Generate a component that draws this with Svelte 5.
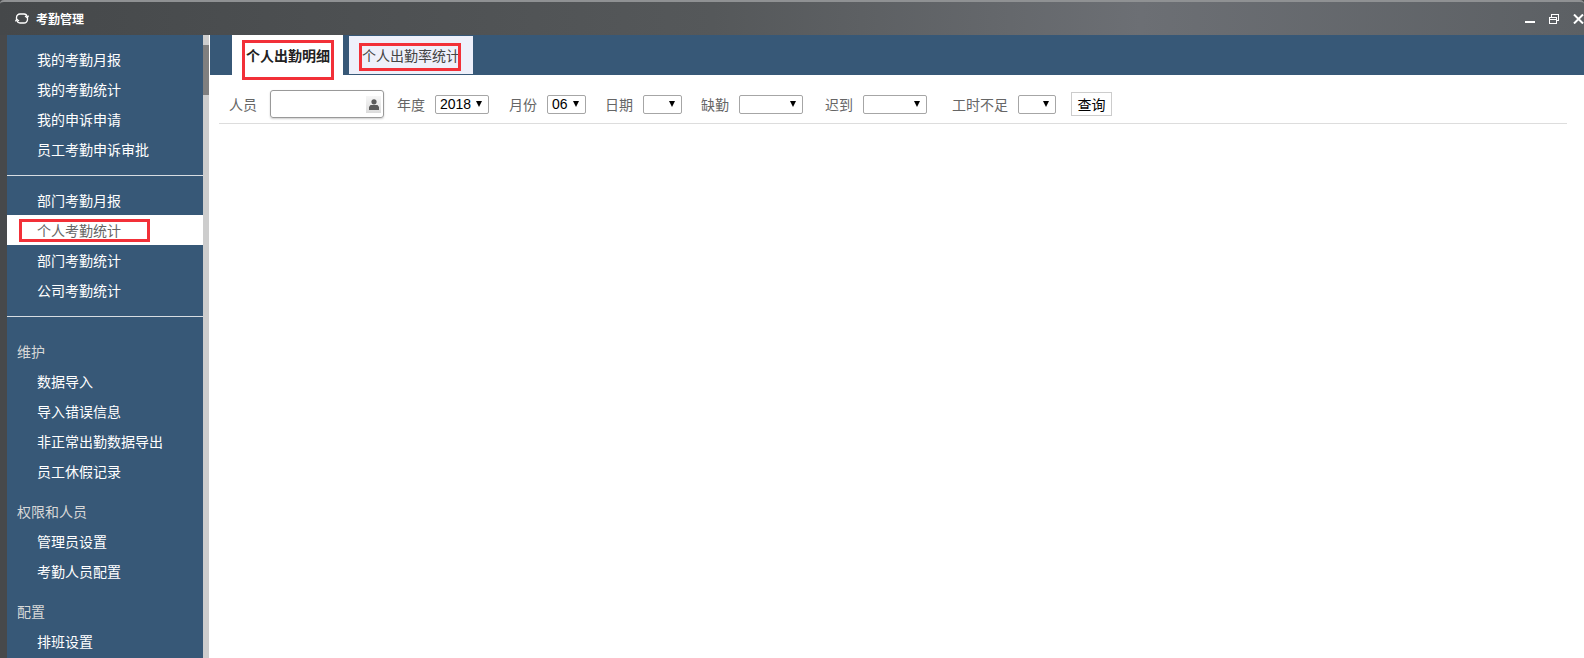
<script>
  const menu = [
    { items: ['我的考勤月报', '我的考勤统计', '我的申诉申请', '员工考勤申诉审批'] },
    { divider: true, items: ['部门考勤月报', '个人考勤统计', '部门考勤统计', '公司考勤统计'] },
    { divider: true, title: '维护', items: ['数据导入', '导入错误信息', '非正常出勤数据导出', '员工休假记录'] },
    { title: '权限和人员', items: ['管理员设置', '考勤人员配置'] },
    { title: '配置', items: ['排班设置'] }
  ];

  const active = '个人考勤统计';

  const filters = [
    { label: '年度', value: '2018', width: 54, left: 13 },
    { label: '月份', value: '06', width: 39, left: 20 },
    { label: '日期', value: '', width: 39, left: 19 },
    { label: '缺勤', value: '', width: 64, left: 19 },
    { label: '迟到', value: '', width: 64, left: 22 },
    { label: '工时不足', value: '', width: 38, left: 25 }
  ];
</script>

<div class="window">
  <header class="titlebar">
    <svg class="refresh" width="14" height="13" viewBox="0 0 14 13" fill="none" stroke="#fff" stroke-width="1.3">
      <path d="M1.5 8 V5.5 A3.5 3.5 0 0 1 5 2 H9 A3 3 0 0 1 12 4.5" />
      <path d="M12.5 5 V7.5 A3.5 3.5 0 0 1 9 11 H5 A3 3 0 0 1 2 8.5" />
      <path d="M10 4 L12 5.5 L13.6 3.6" />
      <path d="M4 9 L2 7.5 L0.4 9.4" />
    </svg>
    <span class="title">考勤管理</span>
    <div class="controls">
      <svg width="10" height="10" viewBox="0 0 10 10"><rect x="0" y="7" width="10" height="2" fill="#fff" /></svg>
      <svg width="10" height="10" viewBox="0 0 10 10" fill="none" stroke="#fff"><rect x="2.5" y="0.5" width="7" height="6" /><rect x="0.5" y="3.5" width="7" height="6" fill="#5c6064" /><path d="M0.5 5.5h7" /></svg>
      <svg width="11" height="10" viewBox="0 0 11 10" stroke="#fff" stroke-width="2"><path d="M1 0.5 L10 9.5 M10 0.5 L1 9.5" /></svg>
    </div>
  </header>

  <div class="body">
    <nav class="sidebar">
      <div class="menu">
        {#each menu as group}
          {#if group.divider}<hr class="divider" />{/if}
          {#if group.title}<div class="group-title">{group.title}</div>{/if}
          <ul>
            {#each group.items as item}
              <li class:active={item === active}>
                {item}
                {#if item === active}<span class="mark mark-side"></span>{/if}
              </li>
            {/each}
          </ul>
        {/each}
      </div>
      <div class="scrollbar"><div class="thumb"></div></div>
    </nav>

    <main class="content">
      <div class="tabs">
        <div class="tab current">个人出勤明细<span class="mark mark-tab1"></span></div>
        <div class="tab">个人出勤率统计<span class="mark mark-tab2"></span></div>
      </div>

      <div class="filters">
        <span class="label">人员</span>
        <div class="person">
          <span class="person-btn">
            <svg width="10" height="11" viewBox="0 0 10 11" fill="#5a5a5a"><circle cx="5" cy="2.8" r="2.6" /><path d="M1.5 6 H8.5 L10 8 V11 H0 V8 Z" /></svg>
          </span>
        </div>
        {#each filters as f}
          <span class="label" style="margin-left: {f.left}px">{f.label}</span>
          <div class="select" style="width: {f.width}px">
            <span>{f.value}</span>
            <i class="arrow"></i>
          </div>
        {/each}
        <button class="query">查询</button>
      </div>
    </main>
  </div>
</div>

<style>
  :global(body) {
    margin: 0;
    background: #fff;
  }

  .window {
    width: 1584px;
    height: 658px;
    overflow: hidden;
    display: flex;
    flex-direction: column;
    font-family: "Noto Sans CJK SC", "Liberation Sans", sans-serif;
    font-size: 14px;
    background: #47494b;
  }

  .titlebar {
    height: 33px;
    flex-shrink: 0;
    display: flex;
    align-items: center;
    padding-left: 15px;
    border-top: 2px solid #8f9193;
    border-radius: 4px 4px 0 0;
    background: linear-gradient(to right, #45484a 0%, #55585a 45%, #6c6f74 72%, #5c6064 100%);
    color: #fff;
  }

  .title {
    margin-left: 7px;
    font-size: 12px;
    font-weight: 700;
  }

  .controls {
    margin-left: auto;
    display: flex;
    align-items: center;
    gap: 14px;
  }

  .body {
    flex: 1;
    display: flex;
    min-height: 0;
    padding-left: 7px;
  }

  .sidebar {
    width: 202px;
    flex-shrink: 0;
    display: flex;
    background: #375877;
    border-right: 1px solid #fff;
  }

  .menu {
    width: 196px;
    padding-top: 9px;
    overflow: hidden;
    color: #fff;
  }

  .menu ul {
    list-style: none;
    margin: 0 0 10px;
    padding: 0;
  }

  .menu li {
    position: relative;
    height: 30px;
    line-height: 30px;
    padding-left: 30px;
  }

  .menu li.active {
    background: #fff;
    color: #666;
  }

  .group-title {
    height: 30px;
    line-height: 30px;
    padding-left: 10px;
    color: #d8d8d8;
  }

  .divider {
    margin: 11px 0 9px;
    border: 0;
    border-top: 1px solid #d8dde2;
  }

  .divider + .group-title {
    margin-top: 19px;
  }

  .menu ul:has(+ .divider) {
    margin-bottom: 0;
  }

  .scrollbar {
    width: 6px;
    background: #cdcdcd;
  }

  .thumb {
    height: 50px;
    margin-top: 10px;
    background: #7f7f7f;
  }

  .content {
    flex: 1;
    min-width: 0;
    background: #fff;
  }

  .tabs {
    height: 40px;
    display: flex;
    align-items: center;
    padding-left: 22px;
    gap: 6px;
    background: #375877;
  }

  .tab {
    position: relative;
    height: 38px;
    line-height: 38px;
    padding: 0 13px;
    background: #eef0fa;
    color: #444;
    box-sizing: border-box;
  }

  .tab.current {
    height: 40px;
    line-height: 40px;
    padding: 0 13px 0 14px;
    background: #fff;
    color: #222;
    font-weight: 700;
  }

  .filters {
    height: 49px;
    box-sizing: border-box;
    margin: 0 17px 0 9px;
    padding: 10px 0 0 10px;
    display: flex;
    align-items: center;
    border-bottom: 1px solid #ddd;
    color: #666;
  }

  .label {
    flex-shrink: 0;
  }

  .person {
    width: 110px;
    height: 26px;
    margin-left: 13px;
    display: flex;
    align-items: center;
    justify-content: flex-end;
    padding-right: 2px;
    border: 1px solid #999;
    border-radius: 3px;
    box-shadow: 0 1px 2px rgba(0, 0, 0, 0.2);
  }

  .person-btn {
    width: 15px;
    height: 17px;
    display: flex;
    align-items: center;
    justify-content: center;
    background: linear-gradient(#f6f6f6, #dcdcdc);
  }

  .select {
    height: 19px;
    margin-left: 10px;
    display: flex;
    align-items: center;
    justify-content: space-between;
    padding: 0 6px 0 4px;
    box-sizing: border-box;
    border: 1px solid #a6a6a6;
    border-radius: 2px;
    font-family: "Liberation Sans", sans-serif;
    color: #000;
  }

  .arrow {
    width: 0;
    height: 0;
    border-left: 3.5px solid transparent;
    border-right: 3.5px solid transparent;
    border-top: 6px solid #000;
  }

  .query {
    width: 41px;
    height: 24px;
    margin-left: 15px;
    padding: 0;
    border: 1px solid #ccc;
    background: #fff;
    color: #000;
    font: inherit;
  }

  .mark {
    position: absolute;
    box-sizing: border-box;
    border: 3px solid #f23038;
    pointer-events: none;
  }

  .mark-side {
    left: 12px;
    top: 4px;
    width: 131px;
    height: 23px;
  }

  .mark-tab1 {
    left: 10px;
    top: 5px;
    width: 92px;
    height: 40px;
  }

  .mark-tab2 {
    left: 10px;
    top: 7px;
    width: 102px;
    height: 28px;
  }
</style>
